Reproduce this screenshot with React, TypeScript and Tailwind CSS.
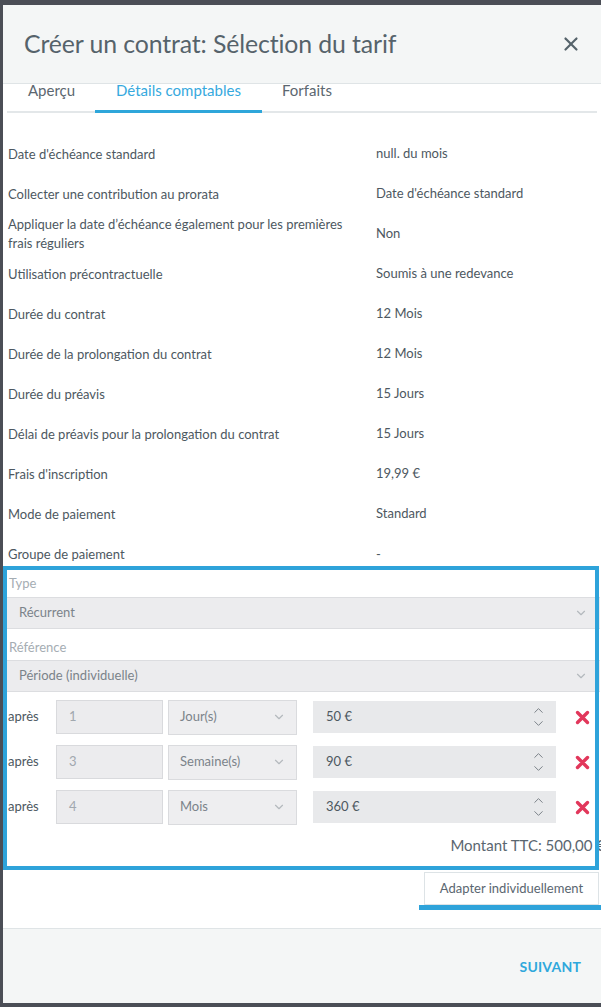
import React from 'react';
import { X, ChevronDown, ChevronUp } from 'lucide-react';

interface DetailRow {
  label: string;
  value: string;
}

const DETAILS: DetailRow[] = [
  { label: "Date d'échéance standard", value: 'null. du mois' },
  { label: 'Collecter une contribution au prorata', value: "Date d'échéance standard" },
  { label: 'Appliquer la date d’échéance également pour les premières frais réguliers', value: 'Non' },
  { label: 'Utilisation précontractuelle', value: 'Soumis à une redevance' },
  { label: 'Durée du contrat', value: '12 Mois' },
  { label: 'Durée de la prolongation du contrat', value: '12 Mois' },
  { label: 'Durée du préavis', value: '15 Jours' },
  { label: 'Délai de préavis pour la prolongation du contrat', value: '15 Jours' },
  { label: "Frais d'inscription", value: '19,99 €' },
  { label: 'Mode de paiement', value: 'Standard' },
];

const STEPS = [
  { after: '1', unit: 'Jour(s)', amount: '50 €' },
  { after: '3', unit: 'Semaine(s)', amount: '90 €' },
  { after: '4', unit: 'Mois', amount: '360 €' },
];

const TABS = ['Aperçu', 'Détails comptables', 'Forfaits'];

const RedCross = () => (
  <svg width="15" height="15" viewBox="0 0 15 15">
    <path d="M2.5 2.5 L12.5 12.5 M12.5 2.5 L2.5 12.5" stroke="#e2375b" strokeWidth="3.4" strokeLinecap="round" />
  </svg>
);

const App: React.FC = () => {
  return (
    <div className="w-[601px] h-[1007px] bg-[#4b4e56] pt-[5px] pl-[3px] pb-[4px] overflow-hidden" style={{ fontFamily: 'Lato, "Open Sans", sans-serif' }}>
      <div className="h-full bg-white flex flex-col">
        {/* Header */}
        <div className="h-[79px] shrink-0 bg-[#f4f6f6] border-b border-[#dfe4e6] flex items-center justify-between pl-[21px] pr-[19px]">
          <h1 className="text-[24.8px] text-[#56636b] tracking-[-0.1px]">Créer un contrat: Sélection du tarif</h1>
          <X size={22} strokeWidth={2.4} className="text-[#56636b]" />
        </div>

        {/* Tabs */}
        <div className="mx-[4px] h-[29px] shrink-0 border-b-2 border-[#e3e7e9] flex items-start">
          {TABS.map((tab, i) => (
            <div
              key={tab}
              className={`h-[29px] -mb-[2px] flex items-start ${i === 1 ? 'border-b-[3px] border-[#2ea6da] text-[#36a9de]' : 'text-[#5c6770]'} ${i === 0 ? 'w-[88px] pl-[21px]' : i === 1 ? 'w-[167px] justify-center' : 'pl-[20px]'}`}
            >
              <span className="text-[15px] leading-[15px] -mt-[1px]">{tab}</span>
            </div>
          ))}
        </div>

        {/* Accounting details */}
        <div className="pt-[21px] pl-[5px] text-[13px] text-[#4d5861]">
          {DETAILS.map(row => (
            <div key={row.label} className="h-[40px] flex items-center">
              <div className="w-[368px] leading-[19px] pr-[10px]">{row.label}</div>
              <div>{row.value}</div>
            </div>
          ))}
          <div className="h-[35px] flex items-center pt-[6px]">
            <div className="w-[368px]">Groupe de paiement</div>
            <div>-</div>
          </div>
        </div>

        {/* Recurring fee block */}
        <div className="relative mt-[1px] pl-[4px] pr-[1px] text-[13px]">
          <div className="h-[27px] flex items-center pl-[2px] pt-[1px] text-[#a5adb3]">Type</div>
          <div className="h-[32px] bg-[#ececee] border-y border-[#dcdde0] flex items-center justify-between pl-[12px] pr-[12px] text-[#7b838a]">
            <span>Récurrent</span>
            <ChevronDown size={14} className="text-[#b4b9bd]" />
          </div>
          <div className="h-[31px] flex items-center pt-[6px] pl-[2px] text-[#a5adb3]">Référence</div>
          <div className="h-[32px] bg-[#ececee] border-y border-[#dcdde0] flex items-center justify-between pl-[12px] pr-[12px] text-[#7b838a]">
            <span>Période (individuelle)</span>
            <ChevronDown size={14} className="text-[#b4b9bd]" />
          </div>

          <div className="pt-[8px] flex flex-col gap-[11px]">
            {STEPS.map(step => (
              <div key={step.after} className="h-[34px] flex items-center">
                <span className="w-[49px] pl-[1px] text-[#4d5861]">après</span>
                <div className="w-[107px] h-[34px] bg-[#ececee] border border-[#d9dadd] flex items-center pl-[12px] text-[#a1a8ae]">
                  {step.after}
                </div>
                <div className="ml-[5px] w-[129px] h-[35px] bg-[#eeeef0] border border-[#dadbde] flex items-center justify-between pl-[11px] pr-[10px] text-[#7b838a]">
                  <span>{step.unit}</span>
                  <ChevronDown size={14} className="text-[#b4b9bd]" />
                </div>
                <div className="ml-[16px] w-[243px] h-[32px] bg-[#e8e9eb] flex items-center justify-between pl-[13px] pr-[10px] text-[#4d5861]">
                  <span>{step.amount}</span>
                  <div className="flex flex-col -space-y-[2px] text-[#737b81]">
                    <ChevronUp size={15} strokeWidth={1.5} />
                    <ChevronDown size={15} strokeWidth={1.5} />
                  </div>
                </div>
                <div className="ml-[19px]">
                  <RedCross />
                </div>
              </div>
            ))}
          </div>

          <div className="h-[42px] flex items-center justify-end -mr-[5px] text-[15px] text-[#5a6670] whitespace-nowrap">
            Montant TTC: 500,00 €
          </div>

          {/* Highlight frame */}
          <div className="absolute -top-[4px] left-0 right-[2px] -bottom-[4px] border-4 border-[#2ea3da] pointer-events-none" />
        </div>

        {/* Individual adjust button */}
        <div className="mt-[6px] flex justify-end">
          <div className="flex flex-col items-end">
            <div className="w-[175px] h-[33px] mr-[2px] border border-[#dde3e6] flex items-center justify-center text-[13px] text-[#5a6670]">
              Adapter individuellement
            </div>
            <div className="w-[182px] h-[5px] bg-[#2ea3da]" />
          </div>
        </div>

        <div className="flex-1" />

        {/* Footer */}
        <div className="h-[75px] shrink-0 bg-[#f4f6f6] border-t border-[#dfe4e6] flex items-center justify-end pr-[20px]">
          <span className="text-[14px] font-bold text-[#2fa8dc] tracking-[0.2px]">SUIVANT</span>
        </div>
      </div>
    </div>
  );
};

export default App;
